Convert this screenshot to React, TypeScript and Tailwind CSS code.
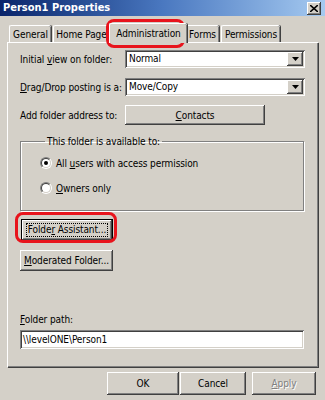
import * as React from "react"

const raised =
    "shadow-[inset_-1px_-1px_#404040,inset_1px_1px_#ffffff,inset_-2px_-2px_#808080,inset_2px_2px_#d4d0c8]"
const sunken =
    "shadow-[inset_1px_1px_#808080,inset_-1px_-1px_#ffffff,inset_2px_2px_#404040,inset_-2px_-2px_#d4d0c8]"

function Select({ value }: { value: string }) {
    return (
        <div className={`flex h-[18px] w-[180px] items-stretch bg-white p-[2px] ${sunken}`}>
            <div className="flex-1 pl-[2px] leading-[14px]">{value}</div>
            <div className={`flex w-[16px] items-center justify-center bg-[#d4d0c8] ${raised}`}>
                <svg width="7" height="4" viewBox="0 0 7 4">
                    <path d="M0 0h7L3.5 4z" fill="#000" />
                </svg>
            </div>
        </div>
    )
}

function Button({ children, className = "" }: { children: React.ReactNode; className?: string }) {
    return (
        <div className={`flex items-center justify-center bg-[#d4d0c8] ${raised} ${className}`}>
            {children}
        </div>
    )
}

function Radio({ checked, children }: { checked?: boolean; children: React.ReactNode }) {
    return (
        <div className="flex h-[12px] items-center gap-[4px]">
            <div className="flex h-[12px] w-[12px] items-center justify-center rounded-full border border-t-[#808080] border-l-[#808080] border-r-white border-b-white">
                <div className="flex h-[10px] w-[10px] items-center justify-center rounded-full border border-t-[#404040] border-l-[#404040] border-r-[#d4d0c8] border-b-[#d4d0c8] bg-white">
                    {checked && <div className="h-[4px] w-[4px] rounded-full bg-black" />}
                </div>
            </div>
            <span>{children}</span>
        </div>
    )
}

const tabs = [
    { label: "General", w: "w-[42px]" },
    { label: "Home Page", w: "w-[56px]" },
    { label: "Administration", w: "w-[78px]", active: true },
    { label: "Forms", w: "w-[34px]" },
    { label: "Permissions", w: "w-[59px]" },
]

export default function App() {
    return (
        <div className="relative h-[400px] w-[325px] overflow-hidden whitespace-nowrap bg-[#d4d0c8] font-['Tahoma','DejaVu_Sans_Condensed','Liberation_Sans',sans-serif] text-[10px] tracking-[-0.1px] text-black">
            {/* title bar */}
            <div className="flex h-[16px] items-center justify-between bg-gradient-to-r from-[#0a246a] via-[#4a78c0] to-[#a6caf0] pl-[3px] pr-[4px]">
                <span className="text-[11px] font-bold tracking-normal text-white">Person1 Properties</span>
                <div className={`flex h-[13px] w-[14px] items-center justify-center bg-[#d4d0c8] ${raised}`}>
                    <svg width="8" height="7" viewBox="0 0 8 7">
                        <path d="M0 0l8 7M8 0L0 7" stroke="#000" strokeWidth="1.6" />
                    </svg>
                </div>
            </div>

            {/* tabs */}
            <div className="mt-[8px] flex h-[18px] items-end pl-[9px]">
                {tabs.map((t) =>
                    t.active ? (
                        <div
                            key={t.label}
                            className={`relative z-10 -mx-[2px] -mb-[1px] flex h-[20px] ${t.w} items-center justify-center rounded-t-[2px] border-t border-l border-white bg-[#d4d0c8] shadow-[inset_-1px_0_#808080,1px_0_#404040]`}
                        >
                            {t.label}
                        </div>
                    ) : (
                        <div
                            key={t.label}
                            className={`mr-[2px] flex h-[17px] ${t.w} items-center justify-center rounded-t-[2px] border-t border-l border-white bg-[#d4d0c8] shadow-[inset_-1px_0_#808080,1px_0_#404040]`}
                        >
                            {t.label}
                        </div>
                    )
                )}
            </div>

            {/* panel */}
            <div className="mx-[7px] h-[325px] border-t border-l border-white pl-[12px] pt-[7px] shadow-[inset_-1px_-1px_#808080,1px_1px_#404040]">
                <div className="flex items-center">
                    <span className="w-[105px]">
                        Initial <u>v</u>iew on folder:
                    </span>
                    <Select value="Normal" />
                </div>
                <div className="mt-[10px] flex items-center">
                    <span className="w-[105px]">
                        <u>D</u>rag/Drop posting is a:
                    </span>
                    <Select value="Move/Copy" />
                </div>
                <div className="mt-[9px] flex items-center">
                    <span className="w-[105px]">Add folder address to:</span>
                    <Button className="h-[20px] w-[140px]">
                        <span>
                            <u>C</u>ontacts
                        </span>
                    </Button>
                </div>

                <fieldset className="mt-[10px] w-[284px] border border-[#808080] pb-[16px] pl-[19px] shadow-[1px_1px_#ffffff,inset_1px_1px_#ffffff]">
                    <legend className="ml-[5px] px-[2px] leading-[13px]">This folder is available to:</legend>
                    <div className="mt-[9px]">
                        <Radio checked>
                            All <u>u</u>sers with access permission
                        </Radio>
                    </div>
                    <div className="mt-[13px]">
                        <Radio>
                            <u>O</u>wners only
                        </Radio>
                    </div>
                </fieldset>

                <div className="mt-[8px] ml-[1px] h-[22px] w-[92px] border border-black">
                    <Button className="h-full w-full">
                        <span className="border border-dotted border-black px-[1px] leading-[12px]">
                            Folde<u>r</u> Assistant...
                        </span>
                    </Button>
                </div>
                <Button className="mt-[9px] h-[21px] w-[93px]">
                    <span>
                        <u>M</u>oderated Folder...
                    </span>
                </Button>

                <div className="mt-[41px]">
                    <u>F</u>older path:
                </div>
                <div className={`mt-[3px] h-[19px] w-[284px] bg-white px-[3px] leading-[19px] ${sunken}`}>
                    \\levelONE\Person1
                </div>
            </div>

            {/* dialog buttons */}
            <div className="mt-[5px] flex pl-[107px]">
                <Button className="h-[23px] w-[72px]">OK</Button>
                <Button className="ml-[1px] h-[23px] w-[66px]">Cancel</Button>
                <Button className="ml-[6px] h-[23px] w-[64px] text-[#808080] [text-shadow:1px_1px_#ffffff]">
                    <span>
                        <u>A</u>pply
                    </span>
                </Button>
            </div>

            {/* red annotation marks */}
            <div className="absolute left-[106px] top-[19px] h-[29px] w-[79px] rounded-[8px] border-[3px] border-[#e8141c]" />
            <div className="absolute left-[15px] top-[212px] h-[31px] w-[102px] rounded-[8px] border-[3px] border-[#e8141c]" />
        </div>
    )
}
